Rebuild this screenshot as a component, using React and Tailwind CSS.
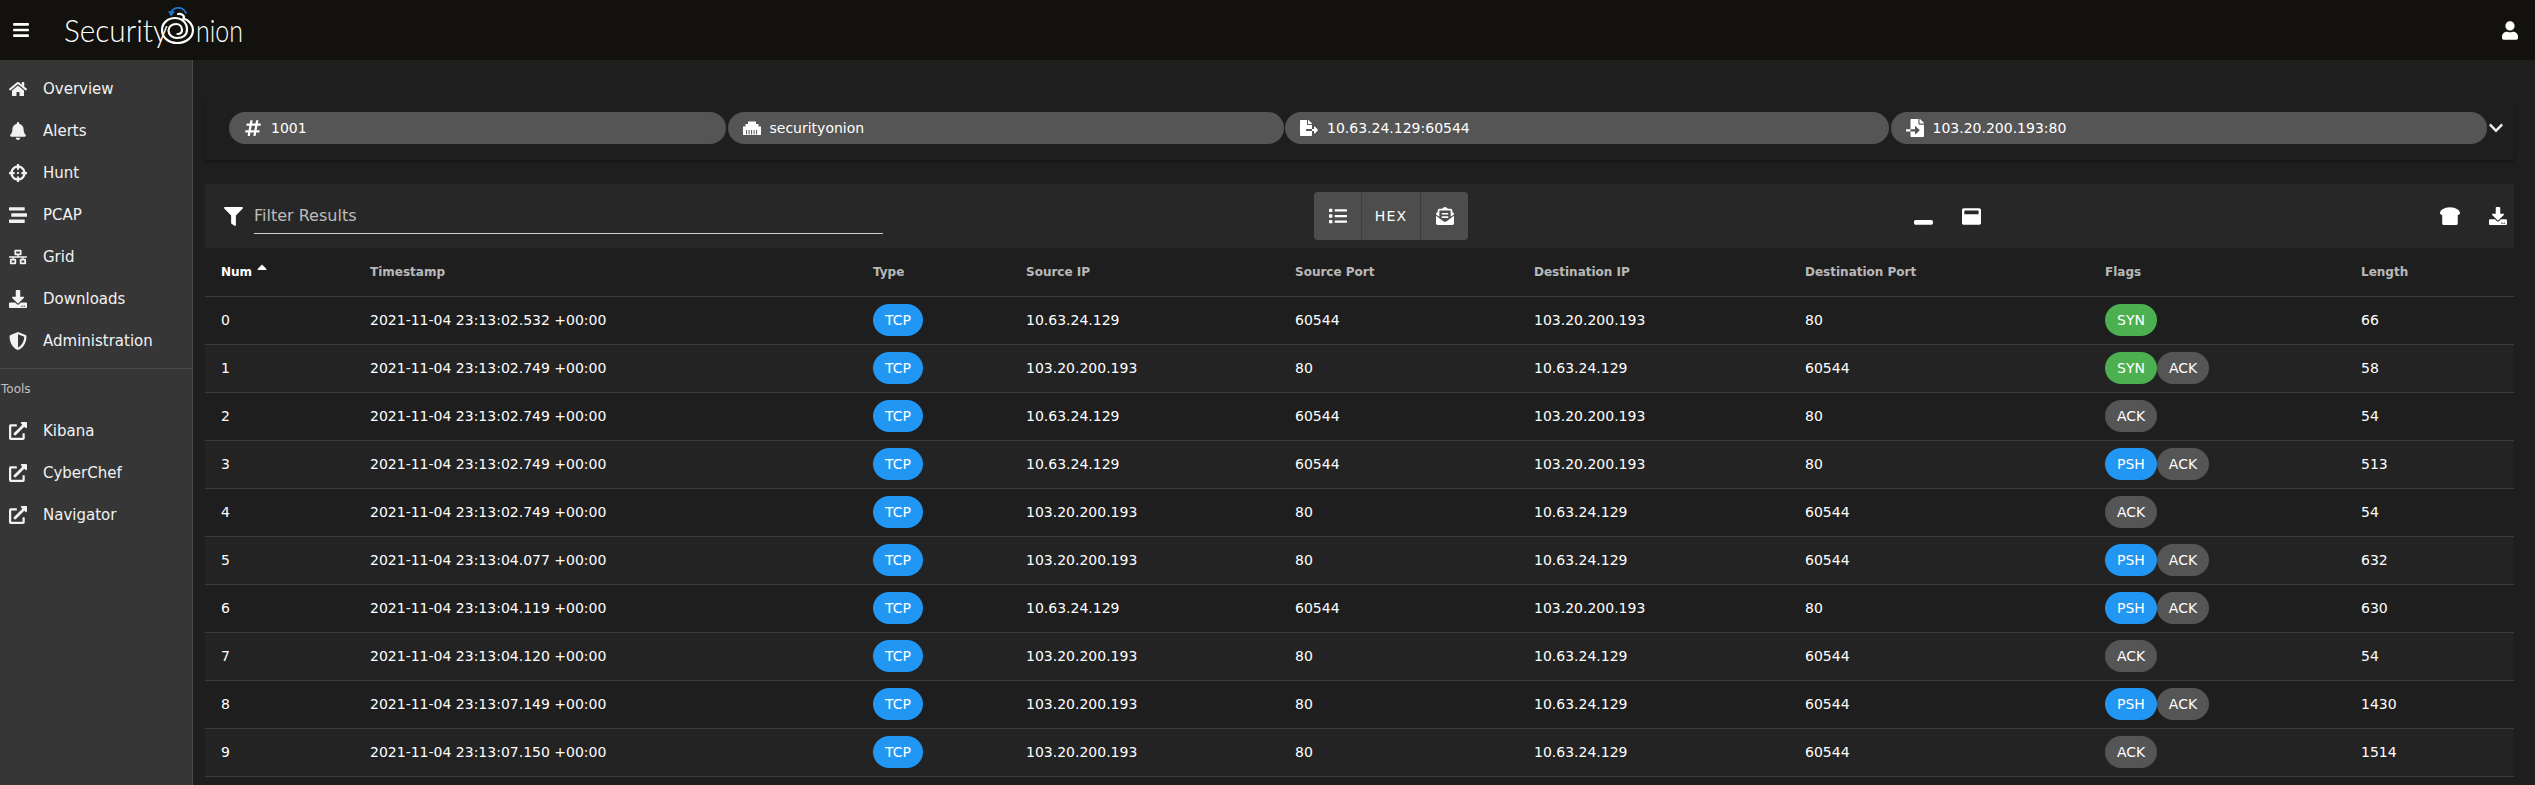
import React from "react";
import {
  FaBars, FaUser, FaHome, FaBell, FaCrosshairs, FaStream, FaNetworkWired, FaDownload, FaShieldAlt,
  FaExternalLinkAlt, FaFilter, FaHashtag, FaFileExport, FaFileImport, FaList,
  FaEnvelopeOpenText, FaWindowMinimize, FaWindowMaximize, FaBreadSlice, FaSortUp, FaChevronDown,
} from "react-icons/fa";

const nav = [
  ["Overview", FaHome], ["Alerts", FaBell], ["Hunt", FaCrosshairs], ["PCAP", FaStream],
  ["Grid", FaNetworkWired], ["Downloads", FaDownload], ["Administration", FaShieldAlt],
];
const tools = ["Kibana", "CyberChef", "Navigator"];
const cols = ["Num", "Timestamp", "Type", "Source IP", "Source Port", "Destination IP", "Destination Port", "Flags", "Length"];
const colW = ["w-[149px]", "w-[503px]", "w-[153px]", "w-[269px]", "w-[239px]", "w-[271px]", "w-[300px]", "w-[256px]", "w-auto"];
const A = "10.63.24.129", B = "103.20.200.193";
const rows = [
  [0, "02.532", A, 60544, B, 80, ["SYN"], 66],
  [1, "02.749", B, 80, A, 60544, ["SYN", "ACK"], 58],
  [2, "02.749", A, 60544, B, 80, ["ACK"], 54],
  [3, "02.749", A, 60544, B, 80, ["PSH", "ACK"], 513],
  [4, "02.749", B, 80, A, 60544, ["ACK"], 54],
  [5, "04.077", B, 80, A, 60544, ["PSH", "ACK"], 632],
  [6, "04.119", A, 60544, B, 80, ["PSH", "ACK"], 630],
  [7, "04.120", B, 80, A, 60544, ["ACK"], 54],
  [8, "07.149", B, 80, A, 60544, ["PSH", "ACK"], 1430],
  [9, "07.150", B, 80, A, 60544, ["ACK"], 1514],
];

function Chip({ label }) {
  const bg = label === "SYN" ? "bg-[#4caf50]" : label === "PSH" || label === "TCP" ? "bg-[#2196f3]" : "bg-[#555555]";
  return <span className={`inline-flex h-8 items-center rounded-2xl px-3 text-sm ${bg}`}>{label}</span>;
}

function Info({ Icon, label, w }) {
  return (
    <div className={`flex h-8 shrink-0 items-center rounded-2xl bg-[#555555] pl-[14px] text-sm text-white ${w}`}>
      <span className="mr-2 flex w-5 shrink-0 justify-center"><Icon className="h-[18px] w-auto" /></span>
      <span>{label}</span>
    </div>
  );
}

function EthernetIcon({ className }) {
  return (
    <svg viewBox="0 0 18 18" className={className} fill="currentColor">
      <path d="M5 2.5 H13 V5 H15.5 V7.5 H18 V16 H0 V7.5 H2.5 V5 H5 Z" />
      <path d="M3.6 11 V15.5 M6.1 11 V15.5 M8.6 11 V15.5 M11.1 11 V15.5 M13.6 11 V15.5" stroke="#555555" strokeWidth="1" fill="none" />
    </svg>
  );
}

function NavRow({ Icon, label }) {
  return (
    <div className="flex h-[42px] items-center pl-[9px] text-[#f2f2f2]">
      <span className="flex w-[34px] shrink-0"><Icon className="h-[18px] w-auto" /></span>
      <span className="text-[15px]">{label}</span>
    </div>
  );
}

function Logo() {
  return (
    <div className="ml-[35px] flex h-full items-center text-white">
      <span className="w-[96px] origin-left scale-x-[0.93] whitespace-nowrap font-['Lato'] text-[32px] font-light leading-none">Security</span>
      <svg viewBox="0 0 36 60" className="h-[60px] w-[36px] shrink-0" fill="none">
        <path d="M11 13 C12.5 7.5 22 5 26 13" stroke="#1976d2" strokeWidth="1.7" strokeLinecap="round" />
        <path d="M8 11 L15 11.5 L11 16.5 Z" fill="#1976d2" />
        <path d="M18 14 C22 13.5 25 16 23.5 18.5 C29 20 33 25 33 30 C33 37.5 26 43 17 43 C8 43 2 37 2 30 C2 23 8 18 15 18 C22 18 27 23 27 29.5 C27 35 23 38 17 38 C12 38 8.5 34.5 8.5 30.5 C8.5 26.5 12 24 16 24 C20 24 22 27 22 30 C22 32.5 20 34 17.5 34" stroke="white" strokeWidth="2.2" strokeLinecap="round" />
      </svg>
      <span className="w-[48px] origin-left scale-x-[0.78] whitespace-nowrap font-['Lato'] text-[32px] font-light leading-none">nion</span>
    </div>
  );
}

export default function App() {
  return (
    <div className="flex h-screen flex-col overflow-hidden bg-[#1e1e1e] font-['DejaVu_Sans',sans-serif] text-white">
      <header className="flex h-[60px] shrink-0 items-center bg-[#12110d]">
        <button className="ml-[13px] flex w-[16px] justify-center"><FaBars className="h-[18px] w-4" /></button>
        <Logo />
        <FaUser className="ml-auto mr-[17px] h-[19px] w-4" />
      </header>
      <div className="flex min-h-0 flex-1">
        <aside className="w-[193px] shrink-0 border-r border-[#4a4a4a] bg-[#363636]">
          <nav className="pt-2">
            {nav.map(([label, Icon]) => <NavRow key={label} Icon={Icon} label={label} />)}
          </nav>
          <div className="mt-[6px] border-t border-[#4c4c4c] pl-px pt-[10px] text-xs leading-[20px] text-[#ffffffb3]">Tools</div>
          <nav className="mt-[11px]">
            {tools.map((label) => <NavRow key={label} Icon={FaExternalLinkAlt} label={label} />)}
          </nav>
        </aside>
        <main className="min-w-0 flex-1 pl-3 pr-[21px] pt-10">
          <section className="flex h-[60px] items-center gap-[1.5px] rounded bg-[#1e1e1e] pb-1 pl-6 shadow-[0_2px_3px_rgba(0,0,0,0.35)]">
            <Info Icon={FaHashtag} label="1001" w="w-[497px]" />
            <Info Icon={EthernetIcon} label="securityonion" w="w-[556px]" />
            <Info Icon={FaFileExport} label="10.63.24.129:60544" w="w-[604px]" />
            <Info Icon={FaFileImport} label="103.20.200.193:80" w="w-[596px]" />
            <FaChevronDown className="h-4 w-4 text-[#eeeeee]" />
          </section>
          <section className="mt-6 flex h-16 items-center bg-[#272727] pl-[19px] pr-[7px]">
            <FaFilter className="h-[19px] w-[19px] shrink-0" />
            <div className="ml-[11px] flex h-[35px] w-[630px] items-center border-b border-[#d0d0d0] text-base text-[#ffffffb3]">Filter Results</div>
            <div className="ml-[431px] flex h-12 items-center rounded bg-[#4d4d4d] text-sm">
              <span className="flex h-full w-12 items-center justify-center border-r border-[#3d3d3d]"><FaList className="h-[18px] w-[18px]" /></span>
              <span className="flex h-full w-[59px] items-center justify-center border-r border-[#3d3d3d] tracking-[1.25px]">HEX</span>
              <span className="flex h-full w-[47px] items-center justify-center"><FaEnvelopeOpenText className="h-[18px] w-[18px]" /></span>
            </div>
            <FaWindowMinimize className="ml-[446px] h-[19px] w-[19px]" />
            <FaWindowMaximize className="ml-[29px] h-[19px] w-[19px]" />
            <FaBreadSlice className="ml-[459px] h-[18px] w-5" />
            <FaDownload className="ml-[29px] h-[18px] w-[18px]" />
          </section>
          <table className="w-full table-fixed border-collapse text-sm">
            <colgroup>{colW.map((c, i) => <col key={i} className={c} />)}</colgroup>
            <thead>
              <tr className="h-12 border-b border-[#3c3c3c]">
                {cols.map((c, i) => (
                  <th key={c} className={`px-4 text-left text-xs font-bold ${i === 0 ? "text-white" : "text-[#ffffffb3]"}`}>
                    {c}{i === 0 && <FaSortUp className="ml-[5px] inline h-4 w-[10px] align-[-3px]" />}
                  </th>
                ))}
              </tr>
            </thead>
            <tbody>
              {rows.map(([n, t, s, sp, d, dp, flags, len]) => (
                <tr key={n} className={`h-12 border-b border-[#3c3c3c] ${n % 2 ? "bg-[#232323]" : "bg-[#1e1e1e]"}`}>
                  <td className="px-4">{n}</td>
                  <td className="px-4">2021-11-04 23:13:{t} +00:00</td>
                  <td className="px-4"><Chip label="TCP" /></td>
                  <td className="px-4">{s}</td>
                  <td className="px-4">{sp}</td>
                  <td className="px-4">{d}</td>
                  <td className="px-4">{dp}</td>
                  <td className="px-4"><div className="flex">{flags.map((f) => <Chip key={f} label={f} />)}</div></td>
                  <td className="px-4">{len}</td>
                </tr>
              ))}
            </tbody>
          </table>
        </main>
      </div>
    </div>
  );
}
